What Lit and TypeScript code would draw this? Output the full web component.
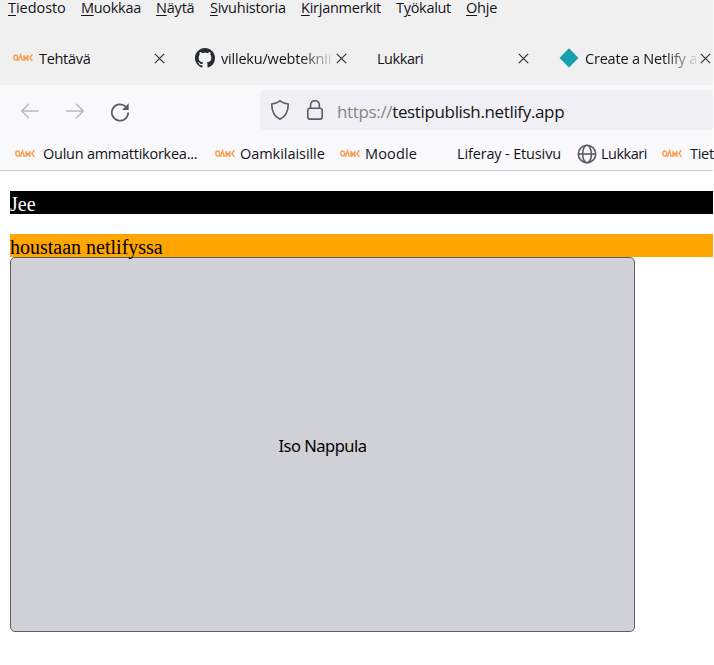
import { LitElement, html, css, svg } from "lit";
import { customElement } from "lit/decorators.js";
import { styleMap } from "lit/directives/style-map.js";

interface Entry { icon?: string; label: string; width: number; spacing?: number; fade?: boolean; }
interface MenuItem { before?: string; key: string; after: string; width: number; spacing: number; }

const MENU: MenuItem[] = [
  { key: "T", after: "iedosto", width: 73, spacing: -0.05 },
  { key: "M", after: "uokkaa", width: 75, spacing: -0.3 },
  { key: "N", after: "äytä", width: 54, spacing: -0.2 },
  { key: "S", after: "ivuhistoria", width: 91, spacing: -0.25 },
  { key: "K", after: "irjanmerkit", width: 95, spacing: -0.25 },
  { before: "T", key: "y", after: "ökalut", width: 70, spacing: -0.3 },
  { key: "O", after: "hje", width: 40, spacing: -0.2 },
];

const TABS: Entry[] = [
  { icon: "oamk", label: "Tehtävä", width: 182, spacing: -0.3 },
  { icon: "github", label: "villeku/webteknii", width: 182, spacing: -0.2, fade: true },
  { label: "Lukkari", width: 182, spacing: -0.45 },
  { icon: "netlify", label: "Create a Netlify a", width: 167, spacing: -0.2, fade: true },
];

const BOOKMARKS: Entry[] = [
  { icon: "oamk", label: "Oulun ammattikorkea...", width: 200, spacing: -0.25 },
  { icon: "oamk", label: "Oamkilaisille", width: 125, spacing: -0.05 },
  { icon: "oamk", label: "Moodle", width: 117, spacing: 0.15 },
  { label: "Liferay - Etusivu", width: 120, spacing: -0.15 },
  { icon: "globe", label: "Lukkari", width: 85, spacing: -0.5 },
  { icon: "oamk", label: "Tiet", width: 51, spacing: -0.3 },
];

const OAMK = svg`<g fill="none" stroke="#f7a055" stroke-width="1.5">
  <ellipse cx="2.7" cy="9.5" rx="1.9" ry="2.6"/><path d="M5.3 12.900 7.500 6.800 9.400 12.900M11 12.900V7.200L12.900 11.200 14.800 7.200V12.900M19.300 6.300 16.900 9.600 19.300 12.900"/></g>`;
const GITHUB = svg`<path fill="#24292f" transform="scale(1.25)" d="M8 0C3.58 0 0 3.58 0 8c0 3.54 2.29 6.53 5.47 7.59.4.07.55-.17.55-.38 0-.19-.01-.82-.01-1.49-2.01.37-2.53-.49-2.69-.94-.09-.23-.48-.94-.82-1.13-.28-.15-.68-.52-.01-.53.63-.01 1.08.58 1.23.82.72 1.21 1.87.87 2.33.66.07-.52.28-.87.51-1.07-1.78-.2-3.64-.89-3.64-3.95 0-.87.31-1.59.82-2.15-.08-.2-.36-1.02.08-2.12 0 0 .67-.21 2.2.82.64-.18 1.32-.27 2-.27s1.36.09 2 .27c1.53-1.04 2.2-.82 2.2-.82.44 1.1.16 1.92.08 2.12.51.56.82 1.27.82 2.15 0 3.07-1.87 3.75-3.65 3.95.29.25.54.73.54 1.48 0 1.07-.01 1.93-.01 2.2 0 .21.15.46.55.38A8.01 8.01 0 0 0 16 8c0-4.42-3.58-8-8-8z"/>`;
const NETLIFY = svg`<path fill="#169fae" d="M10 .3 19.5 10 10 19.5.5 10z"/>`;
const GLOBE = svg`<g fill="none" stroke="#5b5b66" stroke-width="1.6"><circle cx="10" cy="10" r="8.7"/><ellipse cx="10" cy="10" rx="4.4" ry="8.7"/><path d="M1.3 10H18.7"/></g>`;
const ICONS: Record<string, unknown> = { oamk: OAMK, github: GITHUB, netlify: NETLIFY, globe: GLOBE };

const cell = (w: number, s = 0) => styleMap({ width: `${w}px`, letterSpacing: `${s}px` });
const favicon = (name?: string) => name ? html`<svg class="icon ${name}" viewBox="0 0 20 20">${ICONS[name]}</svg>` : null;

@customElement("app-root")
export class AppRoot extends LitElement {
  static styles = css`
    :host { display: block; width: 714px; height: 665px; box-sizing: border-box; padding-right: 1px; background: #fff; font: 14.5px/20px "Open Sans", "Noto Sans", sans-serif; color: #15141a; }
    svg { display: block; flex: none; }
    .menu, .tabs, .tools, .bookmarks, .menu-item, .tab, .bookmark { display: flex; }
    .menu { height: 31px; padding-left: 8px; background: #f0f0f0; line-height: 16px; }
    .menu-item { flex: none; white-space: pre; }
    .menu-item u { text-underline-offset: 2px; text-decoration-thickness: 1px; }
    .tabs { height: 54px; background: #f0f0f0; }
    .tab { flex: none; box-sizing: border-box; align-items: center; padding: 0 17px 0 13px; }
    .tab:last-child { padding-right: 2px; }
    .icon { width: 20px; height: 20px; margin-right: 6px; }
    .tab-label { flex: 1; min-width: 0; white-space: nowrap; padding-top: 1px; }
    .fade { -webkit-mask-image: linear-gradient(to left, transparent, #000 36px); mask-image: linear-gradient(to left, transparent, #000 36px); }
    .close { width: 11px; height: 11px; }
    .tools { height: 53px; background: #f9f9fb; align-items: center; padding-left: 20px; }
    .nav { width: 20px; height: 20px; margin: 0 25px 1px 0; }
    .reload { margin-bottom: 0; }
    .address { display: flex; flex: 1; align-items: center; height: 40px; box-sizing: border-box; margin: 0 0 3px 105px; padding-left: 10px; border-radius: 5px 0 0 5px; background: #f0f0f4; font-size: 17px; }
    .address svg { width: 20px; height: 20px; margin-right: 15px; }
    .url { letter-spacing: -0.35px; margin-left: -3px; padding-top: 3px; white-space: nowrap; }
    .scheme { color: #85858c; }
    .bookmarks { height: 32px; padding-left: 15px; background: #f9f9fb; border-bottom: 1px solid #cccccf; }
    .bookmark { flex: none; height: 20px; align-items: center; margin-top: 6px; white-space: nowrap; }
    .bookmark .icon { margin-right: 8px; }
    .bookmark:nth-child(3) .icon, .bookmark:nth-child(2) .icon { margin-right: 5px; }
    .bookmark .globe { margin-right: 4px; }
    .page { padding: 20px 0 0 10px; font: 20px/23px "Liberation Serif", serif; color: #000; }
    .bar { height: 23px; box-sizing: border-box; padding-top: 2px; line-height: 22px; }
    .black { background: #000; color: #fff; margin-bottom: 20px; }
    .orange { background: #ffa500; }
    .big { display: block; width: 625px; height: 375px; box-sizing: border-box; margin: 0; padding: 2px 0 0; border: 1px solid #5f5e69; border-radius: 5px; background: #d0d0d7; color: #000; font: 16.5px/20px "Noto Sans", "Open Sans", sans-serif; letter-spacing: -0.5px; }
  `;

  render() {
    return html`
      <nav class="menu">${MENU.map(m => html`<span class="menu-item" style=${cell(m.width, m.spacing)}><span>${m.before ?? ""}<u>${m.key}</u>${m.after}</span></span>`)}</nav>
      <div class="tabs">${TABS.map(t => html`<div class="tab" style=${cell(t.width, t.spacing)}>${favicon(t.icon)}<span class="tab-label ${t.fade ? "fade" : ""}">${t.label}</span>
        <svg class="close" viewBox="0 0 11 11"><path d="M.8.8 10.2 10.2M10.2.8.8 10.2" stroke="#333" stroke-width="1.2"/></svg></div>`)}</div>
      <div class="tools">
        <svg class="nav" viewBox="0 0 20 20" fill="none" stroke="#b9b9bf" stroke-width="1.5"><path d="M18.7 10H1.8M9 2.8 1.8 10 9 17.2"/></svg>
        <svg class="nav" viewBox="0 0 20 20" fill="none" stroke="#b9b9bf" stroke-width="1.5"><path d="M1.3 10H18.2M11 2.8 18.2 10 11 17.2"/></svg>
        <svg class="nav reload" viewBox="0 0 20 20" fill="none" stroke="#5b5b66" stroke-width="1.7"><path d="M15.7 4.6A8.2 8.2 0 1 0 18.2 10.5"/><path d="M18.7 1.2V8H12z" fill="#5b5b66" stroke="none"/></svg>
        <div class="address">
          <svg viewBox="0 0 20 20" fill="none" stroke="#5b5b66" stroke-width="1.6" stroke-linejoin="round"><path d="M10 .9C7.8 2.5 5 3.6 1.7 4 1.7 11.5 4 16.5 10 19.2 16 16.5 18.3 11.5 18.3 4 15 3.6 12.2 2.5 10 .9z"/></svg>
          <svg viewBox="0 0 20 20" fill="none" stroke="#5b5b66" stroke-width="1.6"><rect x="2.8" y="8.3" width="14.4" height="10.8" rx="2.2"/><path d="M5.6 8.3V5A4.4 4.4 0 0 1 14.4 5V8.3"/></svg>
          <span class="url"><span class="scheme">https://</span>testipublish.netlify.app</span>
        </div>
      </div>
      <div class="bookmarks">${BOOKMARKS.map(b => html`<span class="bookmark" style=${cell(b.width, b.spacing)}>${favicon(b.icon)}<span>${b.label}</span></span>`)}</div>
      <main class="page">
        <div class="bar black">Jee</div>
        <div class="bar orange">houstaan netlifyssa</div>
        <button class="big">Iso Nappula</button>
      </main>`;
  }
}
